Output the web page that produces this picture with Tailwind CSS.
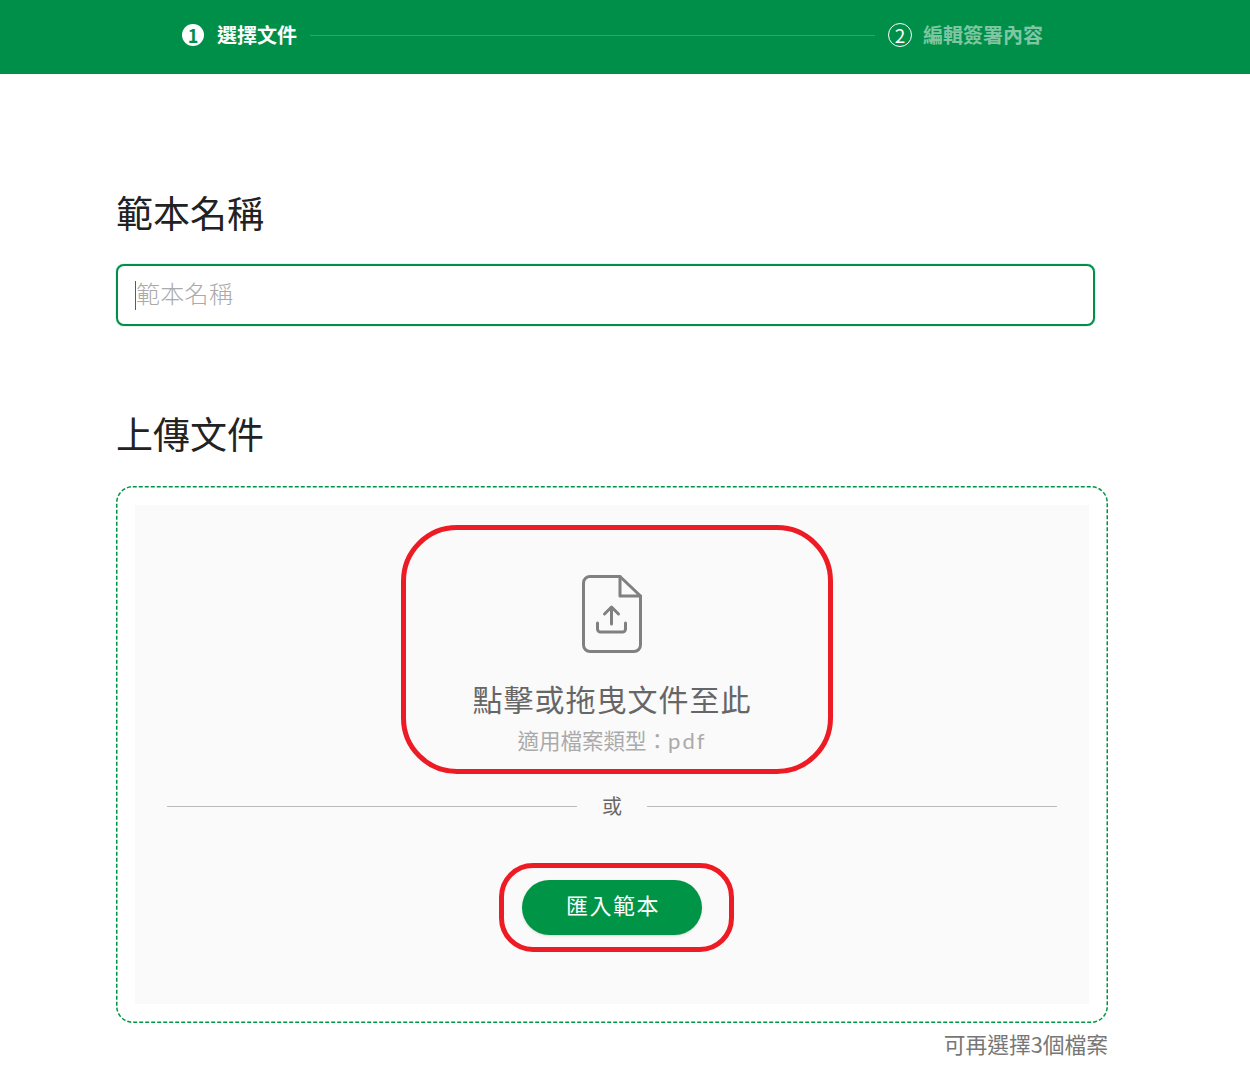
<!DOCTYPE html>
<html lang="zh-Hant">

<head>
    <meta charset="UTF-8">
    <meta name="viewport" content="width=device-width, initial-scale=1.0">
    <title>選擇文件</title>
    <script src="https://cdn.jsdelivr.net/npm/@tailwindcss/browser@4"></script>
</head>

<body class="bg-white font-['Noto_Sans_CJK_TC','Noto_Sans',sans-serif] overflow-hidden">
    <!-- steps -->
    <header class="h-[74px] bg-[#008f48] flex items-center pl-[182px] pr-[207px] pb-[4px]">
        <div class="w-[22px] h-[22px] rounded-full bg-white text-[#008f48] flex items-center justify-center text-[18px] font-bold leading-none">1</div>
        <span class="ml-[13px] text-white text-[20px] font-bold leading-none">選擇文件</span>
        <div class="flex-1 h-px bg-white/20 mx-[13px]"></div>
        <div class="w-[24px] h-[24px] pb-[2px] rounded-full border border-white text-white flex items-center justify-center text-[19px] leading-none">2</div>
        <span class="ml-[11px] text-white/50 text-[20px] font-bold leading-none">編輯簽署內容</span>
    </header>

    <main class="pl-[116px] w-[1108px]">
        <h2 class="mt-[113px] h-[54px] text-[37px] leading-[50px] text-[#222]">範本名稱</h2>
        <div class="mt-[23px] w-[979px] h-[62px] border-2 border-[#008f48] shadow-[0_0_1px_#008f48] rounded-lg flex items-center pl-[17px]">
            <div class="w-px h-[29px] bg-[#008f48]"></div>
            <span class="pb-[4px] text-[24px] leading-none tracking-[0.3px] text-[#aaa] font-light">範本名稱</span>
        </div>

        <h2 class="mt-[82px] h-[54px] text-[37px] leading-[50px] text-[#222]">上傳文件</h2>
        <div class="relative mt-[24px] h-[537px] p-[19px]">
            <!-- dashed frame, css dashes are too long at this weight -->
            <svg class="absolute inset-0 w-[992px] h-[537px]" viewBox="0 0 992 537" fill="none">
                <rect x="0.75" y="0.75" width="990.5" height="535.5" rx="16" stroke="#009447" stroke-width="1.5" stroke-dasharray="4 2" />
            </svg>
            <div class="h-full bg-[#fafafa] flex flex-col items-center pt-[70px]">
                <div class="relative flex flex-col items-center">
                    <div class="absolute left-1/2 -translate-x-[211px] -top-[50px] w-[432px] h-[249px] border-[5px] border-[#ed1c24] rounded-[56px]"></div>
                    <svg class="w-[60px] h-[78px] text-[#808080]" viewBox="0 0 60 78" fill="none" stroke="currentColor" stroke-width="3" stroke-linecap="round" stroke-linejoin="round">
                        <path d="M38 1.5H8A6.5 6.5 0 0 0 1.5 8V70A6.5 6.5 0 0 0 8 76.500H52A6.500 6.500 0 0 0 58.500 70V21Z" />
                        <path d="M38 1.500V21H58.500" />
                        <path d="M29.500 32V49M22.500 39L29.500 32L36.500 39" />
                        <path d="M15.500 48V54A3 3 0 0 0 18.500 57H40.500A3 3 0 0 0 43.500 54V48" />
                    </svg>
                    <p class="mt-[27px] text-[30px] leading-[36px] tracking-[1px] text-[#666]">點擊或拖曳文件至此</p>
                    <p class="mt-[6px] text-[21.5px] leading-[36px] text-[#aaa]">適用檔案類型：<span class="font-['Lato',sans-serif] text-[22px] tracking-[2px]">pdf</span></p>
                </div>

                <div class="mt-[29px] w-[890px] flex items-center gap-[25px]">
                    <div class="flex-1 h-px bg-[#bbb]"></div>
                    <span class="text-[20px] leading-[36px] text-[#666]">或</span>
                    <div class="flex-1 h-px bg-[#bbb]"></div>
                </div>

                <div class="relative mt-[56px]">
                    <div class="absolute -left-[23px] -top-[17px] w-[235px] h-[89px] border-[5px] border-[#ed1c24] rounded-[34px]"></div>
                    <button class="w-[180px] h-[55px] pb-[6px] pl-[2px] rounded-full bg-[#009447] text-white text-[22px] tracking-[1.5px] shadow">匯入範本</button>
                </div>
            </div>
        </div>
        <p class="mt-[6px] text-right text-[21.75px] leading-[30px] text-[#777]">可再選擇3個檔案</p>
    </main>
</body>

</html>
